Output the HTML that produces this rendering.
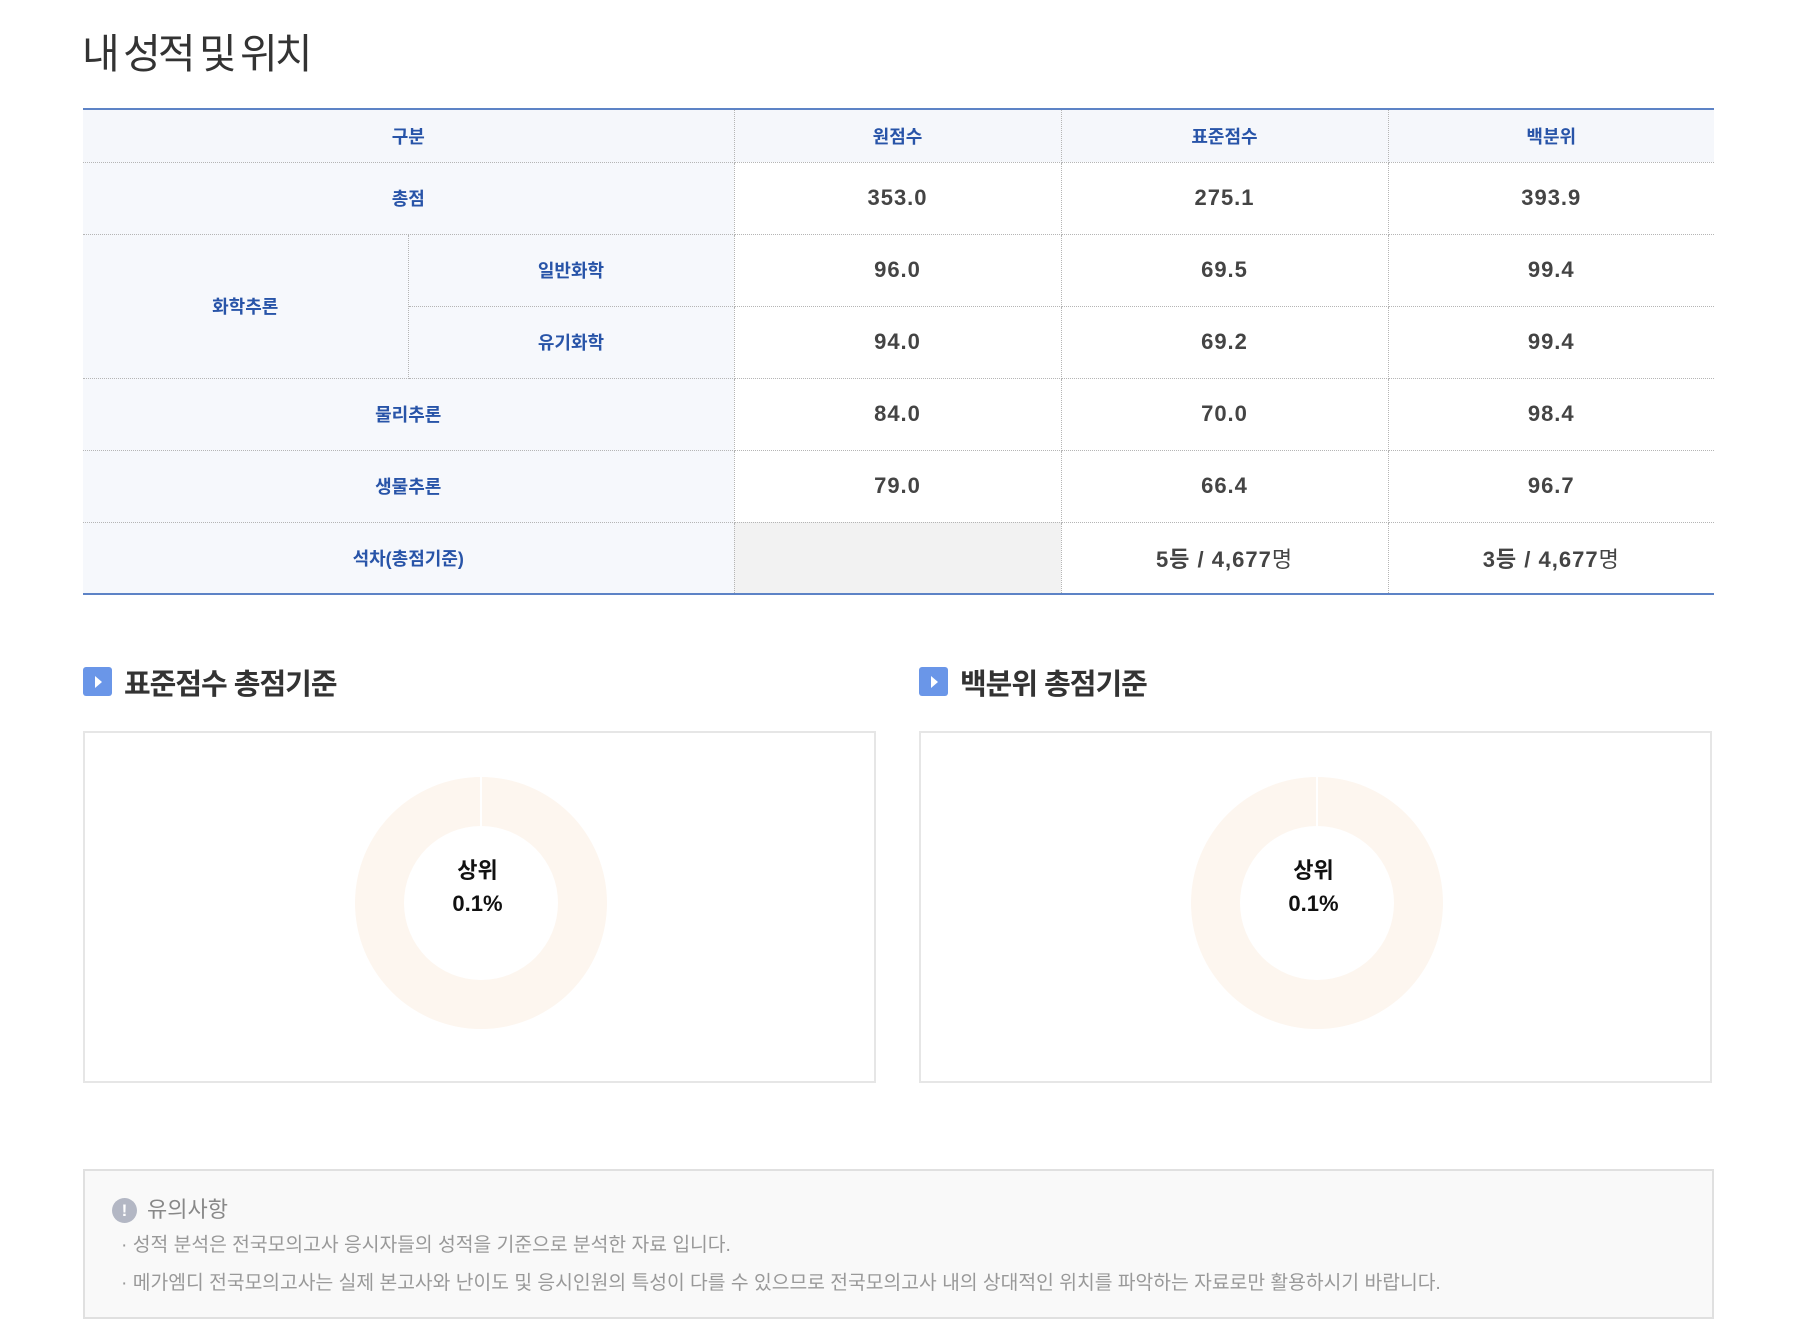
<!DOCTYPE html>
<html><head><meta charset="utf-8"><style>
*{margin:0;padding:0;box-sizing:border-box}
body{width:1799px;height:1339px;background:#fff;position:relative;font-family:"Liberation Sans","Noto Sans CJK KR",sans-serif;overflow:hidden}
h1{position:absolute;left:82px;top:20px;font-size:41px;font-weight:400;color:#333;letter-spacing:-3px;word-spacing:-2px}
table{position:absolute;left:83px;top:108px;width:1631px;border-collapse:collapse;border-top:2px solid #5d83c6;border-bottom:2px solid #5d83c6}
td{border:1px dotted #b5b5b5;text-align:center;font-size:19px;font-weight:700}
tr:first-child td{border-top:none}
tr:last-child td{border-bottom:none}
td:first-child{border-left:none}
td:last-child{border-right:none}
.h td{height:53px;background:#f5f7fb;color:#2854a8;font-size:18px}
.l{background:#f6f8fc;color:#2854a8;font-size:18px}
.v{color:#444;font-size:22px;letter-spacing:1px}
tr.r td{height:72px}
.g{background:#f2f2f2}
.hd{position:absolute;top:661px;font-size:29px;font-weight:700;color:#333;letter-spacing:-1px;padding-left:41px}
.hd:before{content:"";position:absolute;left:0;top:6px;width:29px;height:29px;background:#6a96e8;border-radius:3px}
.hd:after{content:"";position:absolute;left:12px;top:15px;border-left:7px solid #fff;border-top:6px solid transparent;border-bottom:6px solid transparent}
.box{position:absolute;top:731px;width:793px;height:352px;border:2px solid #e6e6e6}
.donut{position:absolute;left:270px;top:44px;width:252px;height:252px;border-radius:50%;background:#fdf6ef}
.donut .in{position:absolute;left:49px;top:49px;width:154px;height:154px;border-radius:50%;background:#fff}
.donut .gap{position:absolute;left:125px;top:0;width:2px;height:50px;background:#fff}
.dt{position:absolute;left:-2px;width:100%;text-align:center;font-size:22px;font-weight:700;color:#111}
.note{position:absolute;left:83px;top:1169px;width:1631px;height:150px;background:#f9f9f9;border:2px solid #e0e0e0}
.note .ic{position:absolute;left:27px;top:27px;width:25px;height:25px;border-radius:50%;background:#b3b7c4;color:#fff;font-weight:700;font-size:17px;text-align:center;line-height:25px}
.note .t{position:absolute;left:62px;top:21px;font-size:22px;color:#888}
.note p{position:absolute;left:36px;font-size:19.3px;color:#999}
</style></head><body>
<h1>내 성적 및 위치</h1>
<table>
<colgroup><col style="width:325px"><col style="width:326px"><col style="width:327px"><col style="width:327px"><col style="width:326px"></colgroup>
<tr class="h"><td colspan="2">구분</td><td>원점수</td><td>표준점수</td><td>백분위</td></tr>
<tr class="r"><td colspan="2" class="l">총점</td><td class="v">353.0</td><td class="v">275.1</td><td class="v">393.9</td></tr>
<tr class="r"><td rowspan="2" class="l">화학추론</td><td class="l">일반화학</td><td class="v">96.0</td><td class="v">69.5</td><td class="v">99.4</td></tr>
<tr class="r"><td class="l">유기화학</td><td class="v">94.0</td><td class="v">69.2</td><td class="v">99.4</td></tr>
<tr class="r"><td colspan="2" class="l">물리추론</td><td class="v">84.0</td><td class="v">70.0</td><td class="v">98.4</td></tr>
<tr class="r"><td colspan="2" class="l">생물추론</td><td class="v">79.0</td><td class="v">66.4</td><td class="v">96.7</td></tr>
<tr class="r"><td colspan="2" class="l">석차(총점기준)</td><td class="g"></td><td class="v">5등 / 4,677<span style="font-weight:400">명</span></td><td class="v">3등 / 4,677<span style="font-weight:400">명</span></td></tr>
</table>
<div class="hd" style="left:83px">표준점수 총점기준</div>
<div class="hd" style="left:919px">백분위 총점기준</div>
<div class="box" style="left:83px"><div class="donut"><div class="gap"></div><div class="in"></div></div><div class="dt" style="top:120px">상위</div><div class="dt" style="top:158px">0.1%</div></div>
<div class="box" style="left:919px"><div class="donut"><div class="gap"></div><div class="in"></div></div><div class="dt" style="top:120px">상위</div><div class="dt" style="top:158px">0.1%</div></div>
<div class="note"><div class="ic">!</div><div class="t">유의사항</div>
<p style="top:58px">· 성적 분석은 전국모의고사 응시자들의 성적을 기준으로 분석한 자료 입니다.</p>
<p style="top:96px">· 메가엠디 전국모의고사는 실제 본고사와 난이도 및 응시인원의 특성이 다를 수 있으므로 전국모의고사 내의 상대적인 위치를 파악하는 자료로만 활용하시기 바랍니다.</p></div>
</body></html>
